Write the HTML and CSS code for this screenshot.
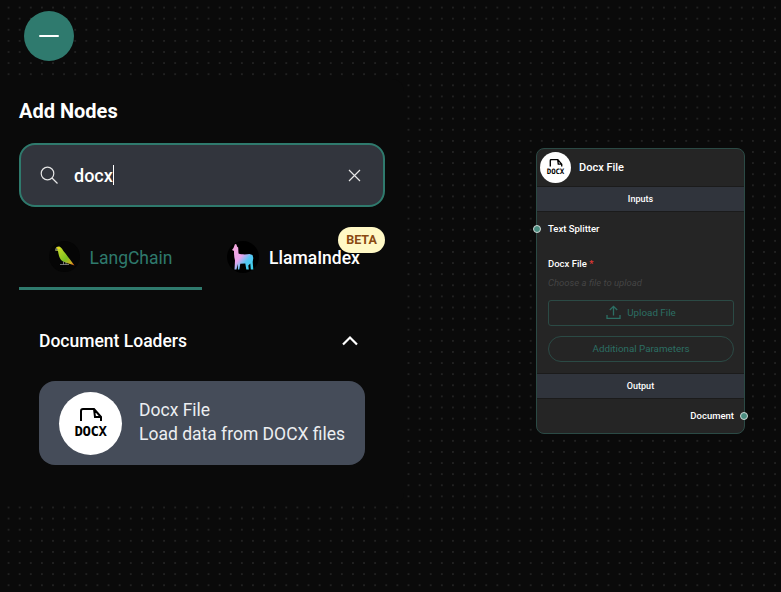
FILE: index.html
```html
<!DOCTYPE html>
<html lang="en">
<head>
<meta charset="utf-8">
<title>Add Nodes</title>
<link rel="stylesheet" href="styles.css">
</head>
<body>
<main class="canvas">
  <button class="fab" aria-label="Close">
    <svg width="24" height="24" viewBox="0 0 24 24"><path d="M3 12h18" fill="none" stroke="#fff" stroke-width="2" stroke-linecap="round"/></svg>
  </button>

  <section class="panel">
    <h1 class="panel-title">Add Nodes</h1>
    <div class="search">
      <svg class="search-icon" width="18" height="18" viewBox="0 0 18 18" fill="none" stroke="#e6e6e6" stroke-width="1.200"><circle cx="7.500" cy="7.500" r="6.300"/><path d="M12 12l5.500 5.500"/></svg>
      <span class="search-text">docx</span><span class="caret"></span>
      <svg class="clear-icon" width="13" height="13" viewBox="0 0 13 13" fill="none" stroke="#e6e6e6" stroke-width="1.200"><path d="M1 1l11 11M12 1L1 12"/></svg>
    </div>

    <div class="tabs">
      <div class="tab tab-active">
        <svg class="tab-logo" width="31" height="31" viewBox="0 0 31 31">
          <defs><linearGradient id="bird" x1="0" y1="0" x2="1" y2="1"><stop offset="0" stop-color="#d8e02a"/><stop offset=".6" stop-color="#7cc020"/><stop offset=".85" stop-color="#d0a820"/><stop offset="1" stop-color="#e0401a"/></linearGradient></defs>
          <circle cx="15.500" cy="15.500" r="15.500" fill="#050505"/>
          <path d="M6.500 8C7 5.800 9.500 5 11.200 6c1.800 1 2.400 3 3.600 4.500 3 3.500 7 9 10.700 14l-2.800-1c-3-1-7-2-9.500-3.500C10 17.500 9.600 13 9 10 8 9.700 7.200 9.600 6.500 10z" fill="url(#bird)"/>
          <path d="M8 6.800c1-1 2.800-.8 3.400.4-.8 1.200-2.600 1.200-3.400-.4z" fill="#f2d81c"/>
          <path d="M6.300 8.200c.4-.7 1-1.100 1.700-1.300l.8 2.500c-.9-.2-1.700 0-2.300.6z" fill="#667"/>
          <path d="M11 23.500h9M14.500 20.500v3M17 21v2.500" stroke="#a0a0a0" stroke-width=".7" fill="none"/>
        </svg>
        <span class="tab-label">LangChain</span>
      </div>
      <div class="tab">
        <svg class="tab-logo" width="32" height="32" viewBox="0 0 32 32">
          <defs><linearGradient id="llama" x1="0" y1="0" x2="1" y2="1"><stop offset="0" stop-color="#f7a8d8"/><stop offset=".45" stop-color="#eaa4ee"/><stop offset=".68" stop-color="#55c8f5"/><stop offset="1" stop-color="#38d0e8"/></linearGradient></defs>
          <circle cx="16" cy="16" r="16" fill="#000"/>
          <path d="M8 3l1.500.5.500 2 1.200 1 .3 6c3 1.200 8 1 11 .5l3 1 .8 3-.6 4 .6 7.500h-2.500l-.5-6-2 2 .5 4h-2.500l-1-6-5 .2-1 5.800H11l-.3-5.500-1.200 5.500H7.500l.5-9C7 16 7 12 7 10L5 9l1.500-2z" fill="url(#llama)"/>
        </svg>
        <span class="tab-label">LlamaIndex</span>
      </div>
      <span class="badge">BETA</span>
    </div>

    <div class="group-head">
      <h2 class="group-title">Document Loaders</h2>
      <svg width="24" height="24" viewBox="0 0 24 24" fill="none" stroke="#fff" stroke-width="2.200"><path d="M5 15.500L12 8.500l7 7"/></svg>
    </div>

    <article class="item">
      <div class="avatar avatar-lg">
        <svg width="24" height="14" viewBox="0 0 24 14" fill="none" stroke="#000" stroke-width="2"><path d="M2 13V3a2 2 0 0 1 2-2h11l7 8v4M15 1l1 8h6"/></svg>
        <span class="docx">DOCX</span>
      </div>
      <div class="item-text">
        <div>Docx File</div>
        <div>Load data from DOCX files</div>
      </div>
    </article>
  </section>

  <section class="node">
    <span class="handle handle-in"></span>
    <span class="handle handle-out"></span>
    <header class="node-head">
      <div class="avatar avatar-sm">
        <svg width="14" height="8" viewBox="0 0 24 14" fill="none" stroke="#000" stroke-width="2.400"><path d="M2 13V3a2 2 0 0 1 2-2h11l7 8v4M15 1l1 8h6"/></svg>
        <span class="docx docx-sm">DOCX</span>
      </div>
      <span class="node-title">Docx File</span>
    </header>
    <div class="band">Inputs</div>
    <div class="node-body">
      <div class="label label-splitter">Text Splitter</div>
      <div class="label label-file">Docx File <span class="req">*</span></div>
      <div class="hint">Choose a file to upload</div>
      <div class="upload">
        <svg width="15" height="15" viewBox="0 0 15 15" fill="none" stroke="#2c6e63" stroke-width="1.300"><path d="M7.500 10.500V1.500M3.800 5l3.700-3.700L11.200 5M1 10v3.300h13V10"/></svg>
        <span>Upload File</span>
      </div>
      <div class="params">Additional Parameters</div>
    </div>
    <div class="band">Output</div>
    <div class="node-foot">Document</div>
  </section>
</main>
</body>
</html>
```
FILE: styles.css
```css
* { box-sizing: border-box; }
html, body { margin: 0; height: 100%; }
body { background: #0a0a0a; font-family: Roboto, "Liberation Sans", sans-serif; overflow: hidden; }

.canvas {
  position: relative;
  width: 781px;
  height: 592px;
  background-color: #0a0a0a;
  background-image: radial-gradient(circle at center, #8a8a8a 0, transparent .8px);
  background-size: 11.11px 11.11px;
  background-position: 3px 2px;
  overflow: hidden;
}

.fab {
  position: absolute;
  left: 24px;
  top: 11px;
  width: 50px;
  height: 50px;
  padding: 0;
  border: 0;
  border-radius: 50%;
  background: #2f7a6e;
  display: flex;
  align-items: center;
  justify-content: center;
}

.panel {
  position: absolute;
  left: 0;
  top: 79px;
  width: 404px;
  height: 426px;
  padding: 20px 19px 0;
  background: #0a0a0a;
  border-radius: 0 12px 12px 0;
  color: #fff;
}
.panel-title { margin: 0; font-size: 20px; line-height: 24px; font-weight: 700; }

.search {
  display: flex;
  align-items: center;
  height: 64px;
  margin-top: 20px;
  padding: 0 22px 0 19px;
  background: #32353d;
  border: 2px solid #2f7a6d;
  border-radius: 16px;
}
.search-icon { flex: none; }
.search-text { margin-left: 16px; font-size: 18px; font-weight: 500; color: #fff; }
.caret { width: 1px; height: 20px; background: #fff; }
.clear-icon { margin-left: auto; }

.tabs { position: relative; display: grid; grid-template-columns: 183px 183px; margin-top: 20px; }
.tab {
  display: flex;
  align-items: center;
  justify-content: center;
  gap: 10px;
  height: 63px;
  padding-top: 2px;
  border-bottom: 3px solid transparent;
  font-size: 17.500px;
  font-weight: 500;
}
.tab-logo { flex: none; margin-top: -3px; }
.tab-active { border-bottom-color: #2f7a6d; color: #2f7a6d; font-weight: 400; }
.badge {
  position: absolute;
  right: 0;
  top: 0;
  width: 47px;
  height: 26px;
  border-radius: 13px;
  background: #fff8c5;
  color: #8a4a12;
  font-size: 12.500px;
  font-weight: 700;
  line-height: 26px;
  text-align: center;
}

.group-head {
  display: flex;
  align-items: center;
  justify-content: space-between;
  margin: 38px 0 0 20px;
  padding-right: 23px;
  height: 26px;
}
.group-title { margin: 0; font-size: 17.500px; line-height: 24px; font-weight: 500; }

.item {
  display: flex;
  align-items: center;
  gap: 17px;
  width: 326px;
  height: 84px;
  margin: 27px 0 0 20px;
  padding: 0 20px;
  background: #454c59;
  border-radius: 16px;
  color: #eceef1;
  font-size: 17.500px;
  line-height: 24px;
}
.item-text { white-space: nowrap; padding-bottom: 2px; }
.avatar {
  flex: none;
  display: flex;
  flex-direction: column;
  align-items: center;
  justify-content: center;
  background: #fff;
  border-radius: 50%;
}
.avatar-lg { width: 63px; height: 63px; }
.avatar-sm { width: 31px; height: 31px; }
.docx { color: #000; font-family: "DejaVu Sans Mono", "Liberation Mono", monospace; font-size: 14px; font-weight: 700; line-height: 15px; letter-spacing: -.4px; margin-top: 2px; }
.docx-sm { font-size: 7.500px; line-height: 8px; letter-spacing: -.2px; margin-top: 1px; }

.node {
  position: absolute;
  left: 536px;
  top: 148px;
  width: 209px;
  height: 286px;
  background: #252525;
  border: 1px solid #2b4a45;
  border-radius: 8px;
  color: #fff;
  font-size: 9.500px;
  font-weight: 500;
}
.handle {
  position: absolute;
  width: 8px;
  height: 8px;
  border-radius: 50%;
  background: #4a8d80;
  border: 1px solid #d0d8d6;
}
.handle-in { left: -4px; top: 76px; }
.handle-out { right: -4px; top: 263px; }

.node-head { display: flex; align-items: center; gap: 7px; height: 37px; padding: 0 3px; }
.node-title { font-size: 11px; font-weight: 500; margin-left: 1px; }
.band {
  height: 26px;
  line-height: 24px;
  text-align: center;
  background: #30343c;
  border-top: 1px solid #1b1b1b;
  border-bottom: 1px solid #1b1b1b;
  font-size: 9px;
  font-weight: 500;
}
.node-body { padding: 0 11px; height: 161px; }
.label { line-height: 12px; }
.label-splitter { padding-top: 11px; height: 23px; }
.label-file { margin-top: 23px; }
.req { color: #e53935; }
.hint { margin-top: 7px; line-height: 12px; color: #444; font-style: italic; font-weight: 400; }
.upload, .params {
  display: flex;
  align-items: center;
  justify-content: center;
  width: 186px;
  height: 26px;
  padding-bottom: 2px;
  border: 1px solid #2b4a45;
  color: #2c6e63;
  font-size: 9.800px;
  font-weight: 400;
}
.upload { margin-top: 11px; gap: 6px; border-radius: 3px; }
.params { margin-top: 10px; border-radius: 13px; }
.node-foot { height: 36px; padding: 11px 10px 0 0; text-align: right; line-height: 12px; }
```
